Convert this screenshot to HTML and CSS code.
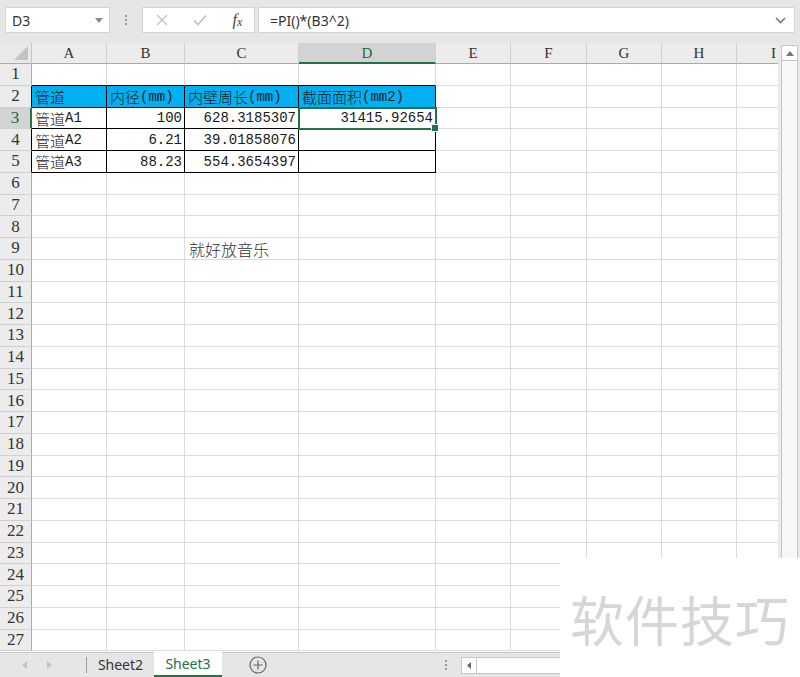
FILE: index.html
```html
<!DOCTYPE html>
<html lang="zh">
<head>
<meta charset="utf-8">
<title>Excel</title>
<link rel="stylesheet" href="styles.css">
</head>
<body>
<div class="app">
  <div class="toolbar">
    <div class="namebox"><span>D3</span><svg class="dd" width="8" height="5" viewBox="0 0 8 5"><path d="M0 0H8L4 5Z" fill="#8a8a8a"/></svg></div>
    <div class="vdots"><i></i><i></i><i></i></div>
    <div class="fxbox">
      <span class="ico"><svg width="14" height="14" viewBox="0 0 14 14"><path d="M2 2L12 12M12 2L2 12" stroke="#c2c2c2" stroke-width="1.3" fill="none"/></svg></span>
      <span class="ico"><svg width="16" height="14" viewBox="0 0 16 14"><path d="M2 7.5L6 11.5L14 2.5" stroke="#c2c2c2" stroke-width="1.6" fill="none"/></svg></span>
      <span class="ico fx">f<span class="x">x</span></span>
    </div>
    <div class="formula"><span>=PI()*(B3^2)</span><svg class="chev" width="11" height="7" viewBox="0 0 11 7"><path d="M1 1L5.5 5.5L10 1" stroke="#777" stroke-width="1.6" fill="none"/></svg></div>
  </div>

  <div class="main">
    <div class="sheet">
      <div class="grid">
        <div class="corner"><svg width="16" height="16" viewBox="0 0 16 16"><path d="M15 1V15H1Z" fill="#c3c3c3"/></svg></div>
        <div class="ch">A</div><div class="ch">B</div><div class="ch">C</div><div class="ch sel">D</div><div class="ch">E</div><div class="ch">F</div><div class="ch">G</div><div class="ch">H</div><div class="ch">I</div>

        <div class="rh">1</div><div class="c tt"></div><div class="c tt"></div><div class="c tt"></div><div class="c tt"></div><div class="c"></div><div class="c"></div><div class="c"></div><div class="c"></div><div class="c"></div>
        <div class="rh tb">2</div><div class="c tb hd"><span class="zh">管道</span></div><div class="c tb hd"><span class="zh">内径</span>(mm)</div><div class="c tb hd"><span class="zh">内壁周长</span>(mm)</div><div class="c tb hd"><span class="zh">截面面积</span>(mm2)</div><div class="c"></div><div class="c"></div><div class="c"></div><div class="c"></div><div class="c"></div>
        <div class="rh tb sel">3</div><div class="c tb"><span class="zh">管道</span>A1</div><div class="c tb r">100</div><div class="c tb r">628.3185307</div><div class="c tb r act">31415.92654</div><div class="c"></div><div class="c"></div><div class="c"></div><div class="c"></div><div class="c"></div>
        <div class="rh tb">4</div><div class="c tb"><span class="zh">管道</span>A2</div><div class="c tb r">6.21</div><div class="c tb r">39.01858076</div><div class="c tb"></div><div class="c"></div><div class="c"></div><div class="c"></div><div class="c"></div><div class="c"></div>
        <div class="rh tb">5</div><div class="c tb"><span class="zh">管道</span>A3</div><div class="c tb r">88.23</div><div class="c tb r">554.3654397</div><div class="c tb"></div><div class="c"></div><div class="c"></div><div class="c"></div><div class="c"></div><div class="c"></div>
        <div class="rh">6</div><div class="c"></div><div class="c"></div><div class="c"></div><div class="c"></div><div class="c"></div><div class="c"></div><div class="c"></div><div class="c"></div><div class="c"></div>
        <div class="rh">7</div><div class="c"></div><div class="c"></div><div class="c"></div><div class="c"></div><div class="c"></div><div class="c"></div><div class="c"></div><div class="c"></div><div class="c"></div>
        <div class="rh">8</div><div class="c"></div><div class="c"></div><div class="c"></div><div class="c"></div><div class="c"></div><div class="c"></div><div class="c"></div><div class="c"></div><div class="c"></div>
        <div class="rh">9</div><div class="c"></div><div class="c"></div><div class="c note">就好放音乐</div><div class="c"></div><div class="c"></div><div class="c"></div><div class="c"></div><div class="c"></div><div class="c"></div>
        <div class="rh">10</div><div class="c"></div><div class="c"></div><div class="c"></div><div class="c"></div><div class="c"></div><div class="c"></div><div class="c"></div><div class="c"></div><div class="c"></div>
        <div class="rh">11</div><div class="c"></div><div class="c"></div><div class="c"></div><div class="c"></div><div class="c"></div><div class="c"></div><div class="c"></div><div class="c"></div><div class="c"></div>
        <div class="rh">12</div><div class="c"></div><div class="c"></div><div class="c"></div><div class="c"></div><div class="c"></div><div class="c"></div><div class="c"></div><div class="c"></div><div class="c"></div>
        <div class="rh">13</div><div class="c"></div><div class="c"></div><div class="c"></div><div class="c"></div><div class="c"></div><div class="c"></div><div class="c"></div><div class="c"></div><div class="c"></div>
        <div class="rh">14</div><div class="c"></div><div class="c"></div><div class="c"></div><div class="c"></div><div class="c"></div><div class="c"></div><div class="c"></div><div class="c"></div><div class="c"></div>
        <div class="rh">15</div><div class="c"></div><div class="c"></div><div class="c"></div><div class="c"></div><div class="c"></div><div class="c"></div><div class="c"></div><div class="c"></div><div class="c"></div>
        <div class="rh">16</div><div class="c"></div><div class="c"></div><div class="c"></div><div class="c"></div><div class="c"></div><div class="c"></div><div class="c"></div><div class="c"></div><div class="c"></div>
        <div class="rh">17</div><div class="c"></div><div class="c"></div><div class="c"></div><div class="c"></div><div class="c"></div><div class="c"></div><div class="c"></div><div class="c"></div><div class="c"></div>
        <div class="rh">18</div><div class="c"></div><div class="c"></div><div class="c"></div><div class="c"></div><div class="c"></div><div class="c"></div><div class="c"></div><div class="c"></div><div class="c"></div>
        <div class="rh">19</div><div class="c"></div><div class="c"></div><div class="c"></div><div class="c"></div><div class="c"></div><div class="c"></div><div class="c"></div><div class="c"></div><div class="c"></div>
        <div class="rh">20</div><div class="c"></div><div class="c"></div><div class="c"></div><div class="c"></div><div class="c"></div><div class="c"></div><div class="c"></div><div class="c"></div><div class="c"></div>
        <div class="rh">21</div><div class="c"></div><div class="c"></div><div class="c"></div><div class="c"></div><div class="c"></div><div class="c"></div><div class="c"></div><div class="c"></div><div class="c"></div>
        <div class="rh">22</div><div class="c"></div><div class="c"></div><div class="c"></div><div class="c"></div><div class="c"></div><div class="c"></div><div class="c"></div><div class="c"></div><div class="c"></div>
        <div class="rh">23</div><div class="c"></div><div class="c"></div><div class="c"></div><div class="c"></div><div class="c"></div><div class="c"></div><div class="c"></div><div class="c"></div><div class="c"></div>
        <div class="rh">24</div><div class="c"></div><div class="c"></div><div class="c"></div><div class="c"></div><div class="c"></div><div class="c"></div><div class="c"></div><div class="c"></div><div class="c"></div>
        <div class="rh">25</div><div class="c"></div><div class="c"></div><div class="c"></div><div class="c"></div><div class="c"></div><div class="c"></div><div class="c"></div><div class="c"></div><div class="c"></div>
        <div class="rh">26</div><div class="c"></div><div class="c"></div><div class="c"></div><div class="c"></div><div class="c"></div><div class="c"></div><div class="c"></div><div class="c"></div><div class="c"></div>
        <div class="rh">27</div><div class="c"></div><div class="c"></div><div class="c"></div><div class="c"></div><div class="c"></div><div class="c"></div><div class="c"></div><div class="c"></div><div class="c"></div>
      </div>
    </div>
    <div class="vscroll">
      <div class="up"><svg width="8" height="5" viewBox="0 0 8 5"><path d="M0 5H8L4 0Z" fill="#777"/></svg></div>
      <div class="track"></div>
    </div>
  </div>

  <div class="tabs">
    <div class="nav">
      <svg width="5" height="8" viewBox="0 0 5 8"><path d="M5 0V8L0 4Z" fill="#c4c4c4"/></svg>
      <svg width="5" height="8" viewBox="0 0 5 8"><path d="M0 0V8L5 4Z" fill="#c4c4c4"/></svg>
    </div>
    <div class="sep"></div>
    <div class="tab">Sheet2</div>
    <div class="tab active">Sheet3</div>
    <div class="add"><svg width="18" height="18" viewBox="0 0 18 18"><circle cx="9" cy="9" r="8" stroke="#666" stroke-width="1.2" fill="none"/><path d="M9 4.5V13.5M4.5 9H13.5" stroke="#666" stroke-width="1.2"/></svg></div>
    <div class="hdots"><i></i><i></i><i></i></div>
    <div class="hscroll">
      <div class="left"><svg width="4" height="7" viewBox="0 0 4 7"><path d="M4 0V7L0 3.5Z" fill="#666"/></svg></div>
      <div class="htrack"></div>
    </div>
  </div>

  <div class="watermark">软件技巧</div>
</div>
</body>
</html>
```

FILE: styles.css
```css
* { box-sizing: border-box; }
html, body { margin: 0; padding: 0; }
body {
  width: 800px;
  height: 677px;
  overflow: hidden;
  background: #e6e6e6;
  font-family: "Noto Sans", "Open Sans", "Liberation Sans", sans-serif;
  color: #222;
}
.app {
  position: relative;
  width: 800px;
  height: 677px;
  display: flex;
  flex-direction: column;
}

/* toolbar */
.toolbar {
  height: 43px;
  flex: none;
  display: flex;
  align-items: flex-start;
  padding: 7px 5px 0 5px;
  background: #e6e6e6;
}
.namebox {
  width: 105px;
  height: 26px;
  background: #fff;
  border: 1px solid #d4d4d4;
  display: flex;
  align-items: center;
  justify-content: space-between;
  padding: 0 6px 0 6px;
  font-size: 14px;
  color: #333;
}
.namebox .dd { margin-top: 1px; }
.vdots {
  width: 32px;
  height: 26px;
  display: flex;
  flex-direction: column;
  align-items: center;
  justify-content: center;
  gap: 2px;
}
.vdots i, .hdots i {
  display: block;
  width: 2px;
  height: 2px;
  background: #9a9a9a;
}
.fxbox {
  width: 113px;
  height: 26px;
  background: #fff;
  border: 1px solid #d4d4d4;
  display: grid;
  grid-template-columns: 38px 38px 37px;
  align-items: center;
  justify-items: center;
}
.ico { display: flex; align-items: center; justify-content: center; }
.fx {
  font-family: "Liberation Serif", serif;
  font-style: italic;
  font-size: 16px;
  color: #444;
  line-height: 1;
}
.fx .x { font-size: 12px; margin-top: 4px; }
.formula {
  flex: 1;
  margin-left: 3px;
  height: 26px;
  background: #fff;
  border: 1px solid #d4d4d4;
  display: flex;
  align-items: center;
  justify-content: space-between;
  padding: 0 8px 0 11px;
  font-size: 14px;
  color: #333;
}

/* main */
.main {
  height: 609px;
  flex: none;
  display: flex;
}
.sheet {
  width: 778px;
  overflow: hidden;
  background: #fff;
}
.grid {
  display: grid;
  grid-template-columns: 32px 75px 78px 114px 137px 75px 76px 75px 75px 74px;
  grid-template-rows: 21px repeat(27, 21.75px);
  width: 811px;
}
.corner {
  background: #e9e9e9;
  border-right: 1px solid #c6c6c6;
  border-bottom: 1px solid #ababab;
  display: flex;
  align-items: flex-end;
  justify-content: flex-end;
  padding: 0 2px 2px 0;
}
.ch {
  background: #ececec;
  border-right: 1px solid #cfcfcf;
  border-bottom: 1px solid #ababab;
  font-family: "Liberation Serif", serif;
  font-size: 15px;
  color: #333;
  display: flex;
  align-items: center;
  justify-content: center;
  padding-top: 1px;
}
.ch.sel {
  background: #d3d3d3;
  border-bottom: 2px solid #217346;
  color: #1d6b40;
}
.rh {
  background: #ececec;
  border-right: 1px solid #ababab;
  border-bottom: 1px solid #d0d0d0;
  font-family: "Liberation Serif", serif;
  font-size: 17px;
  color: #333;
  display: flex;
  align-items: center;
  justify-content: center;
}
.rh.tb { border-right-color: #000; }
.rh.sel {
  background: #d3d3d3;
  color: #1d6b40;
  border-right: 2px solid #217346;
}
.c {
  border-right: 1px solid #dcdcdc;
  border-bottom: 1px solid #dcdcdc;
  font-family: "Liberation Mono", "Noto Sans CJK SC", monospace;
  font-size: 14px;
  color: #1a1a1a;
  display: flex;
  align-items: center;
  padding: 1px 2px 0 3px;
  white-space: nowrap;
}
.c .zh {
  font-family: "Noto Sans CJK SC", sans-serif;
  font-size: 15px;
  font-weight: 300;
}
.c.tt { border-bottom-color: #000; }
.c.tb { border-right-color: #000; border-bottom-color: #000; }
.c.hd { background: #00b0f0; }
.c.r { justify-content: flex-end; }
.c.note {
  font-family: "Noto Sans CJK SC", sans-serif;
  font-size: 16px;
  font-weight: 300;
  color: #333;
  padding-left: 4px;
  overflow: visible;
}
.c.act {
  position: relative;
  outline: 2px solid #217346;
  outline-offset: -1px;
  z-index: 1;
}
.c.act::after {
  content: "";
  position: absolute;
  right: -4px;
  bottom: -4px;
  width: 6px;
  height: 6px;
  background: #217346;
  border: 1px solid #fff;
}

/* vertical scrollbar */
.vscroll {
  width: 22px;
  background: #e9e9e9;
  display: flex;
  flex-direction: column;
  padding: 2px 2px 0 3px;
}
.up {
  height: 16px;
  background: #fff;
  border: 1px solid #c6c6c6;
  display: flex;
  align-items: center;
  justify-content: center;
}
.track {
  flex: 1;
  background: #f7f7f7;
  border: 1px solid #c6c6c6;
  border-top: none;
}

/* sheet tabs */
.tabs {
  height: 25px;
  flex: none;
  display: flex;
  align-items: stretch;
  background: #e6e6e6;
  border-top: 1px solid #c6c6c6;
}
.nav {
  width: 86px;
  display: flex;
  align-items: center;
  gap: 20px;
  padding-left: 22px;
}
.sep {
  width: 1px;
  height: 16px;
  margin-top: 4px;
  background: #9c9c9c;
}
.tab {
  width: 67px;
  display: flex;
  align-items: center;
  justify-content: center;
  font-size: 14px;
  color: #333;
  padding-bottom: 2px;
}
.tab.active {
  width: 68px;
  background: #fff;
  color: #217346;
  border-bottom: 2px solid #217346;
  margin-top: -1px;
  padding-bottom: 1px;
}
.add {
  margin-left: 27px;
  display: flex;
  align-items: center;
}
.hdots {
  margin-left: auto;
  width: 10px;
  display: flex;
  flex-direction: column;
  align-items: center;
  justify-content: center;
  gap: 2px;
}
.hscroll {
  width: 339px;
  margin-left: 10px;
  display: flex;
  align-items: center;
}
.left {
  width: 16px;
  height: 17px;
  background: #fff;
  border: 1px solid #c6c6c6;
  display: flex;
  align-items: center;
  justify-content: center;
}
.htrack {
  flex: 1;
  height: 17px;
  background: #fff;
  border: 1px solid #c6c6c6;
  border-left: none;
}

/* watermark overlay */
.watermark {
  position: absolute;
  left: 560px;
  top: 558px;
  width: 240px;
  height: 119px;
  background: #fff;
  display: flex;
  align-items: center;
  justify-content: center;
  font-family: "Noto Sans CJK SC", sans-serif;
  font-size: 54px;
  color: #d6d6d6;
  letter-spacing: 1px;
  padding-top: 2px;
}
```
